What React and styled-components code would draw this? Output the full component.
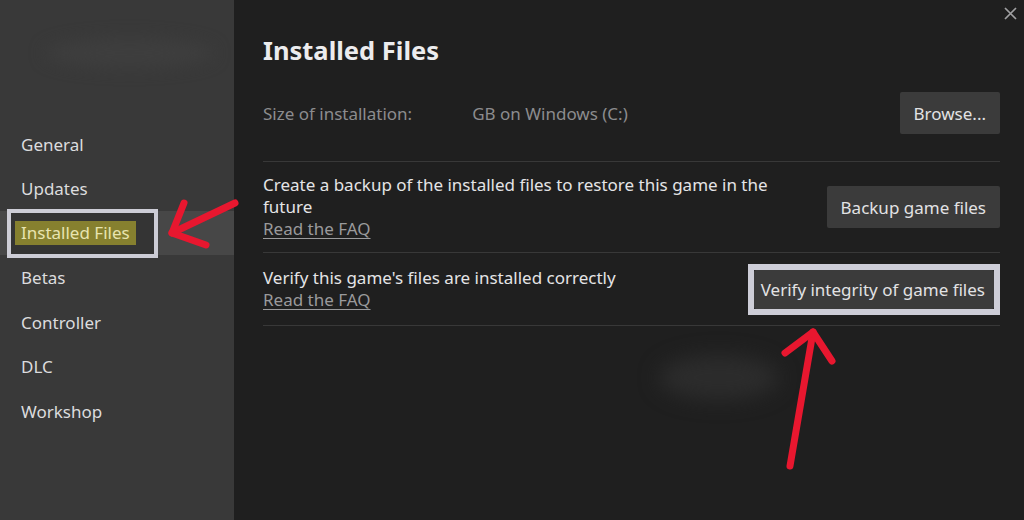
import React from "react";
import styled, { createGlobalStyle } from "styled-components";

const GlobalStyle = createGlobalStyle`
  html, body { margin: 0; padding: 0; background: #1f1f1f; }
  * { box-sizing: border-box; }
`;

const navItems = ["General", "Updates", "Installed Files", "Betas", "Controller", "DLC", "Workshop"];

function App() {
  return (
    <Page>
      <GlobalStyle />
      <Sidebar>
        <BlurName />
        <Nav>
          {navItems.map((item) => (
            <NavItem key={item} $active={item === "Installed Files"}>
              {item === "Installed Files" ? (
                <Marked>
                  <Highlight>{item}</Highlight>
                </Marked>
              ) : (
                item
              )}
            </NavItem>
          ))}
        </Nav>
      </Sidebar>
      <Main>
        <CloseBtn aria-label="close">
          <svg width="13" height="13" viewBox="0 0 13 13">
            <path d="M1 1L12 12M12 1L1 12" stroke="#a0a0a2" strokeWidth="1.7" />
          </svg>
        </CloseBtn>
        <Title>Installed Files</Title>
        <SizeRow>
          <Muted>Size of installation:</Muted>
          <Muted $gap>GB on Windows (C:)</Muted>
          <Spacer />
          <Button>Browse...</Button>
        </SizeRow>
        <Row>
          <TextCol>
            <Desc>Create a backup of the installed files to restore this game in the future</Desc>
            <Faq href="#">Read the FAQ</Faq>
          </TextCol>
          <Button>Backup game files</Button>
        </Row>
        <Row $pad={14}>
          <TextCol>
            <Desc>Verify this game's files are installed correctly</Desc>
            <Faq href="#">Read the FAQ</Faq>
          </TextCol>
          <Outline>
            <Button $slim>Verify integrity of game files</Button>
          </Outline>
        </Row>
        <Smudge />
      </Main>
      <Arrows viewBox="0 0 1024 520" width="1024" height="520">
        <g stroke="#e8172f" strokeWidth="7" strokeLinecap="round" strokeLinejoin="round" fill="none">
          <path d="M235 203L172 233" />
          <path d="M184 203L172 233L206 245" />
          <path d="M813 332L790 466" />
          <path d="M785 353L813 332L832 361" />
        </g>
      </Arrows>
    </Page>
  );
}

export default App;

const Page = styled.div`
  position: relative;
  display: flex;
  width: 1024px;
  height: 520px;
  overflow: hidden;
  background: #1f1f1f;
  font-family: "Noto Sans", "Open Sans", sans-serif;
  color: #e6e6e8;
`;

const Sidebar = styled.aside`
  width: 234px;
  flex-shrink: 0;
  background: #393939;
  display: flex;
  flex-direction: column;
  padding-top: 38px;
`;

const BlurName = styled.div`
  height: 30px;
  margin: 0 20px 0 45px;
  border-radius: 50%;
  background: #3e3e3e;
  filter: blur(8px);
`;

const Nav = styled.nav`
  margin-top: 53.75px;
  display: flex;
  flex-direction: column;
`;

const NavItem = styled.div`
  height: 44.5px;
  display: flex;
  align-items: center;
  padding-left: ${(p) => (p.$active ? "7px" : "21px")};
  font-size: 17px;
  color: #dcdcde;
  background: ${(p) => (p.$active ? "#474747" : "transparent")};
`;

const Marked = styled.span`
  display: flex;
  align-items: center;
  height: 49px;
  padding: 0 18px 0 4px;
  border: 4px solid #cdcdd6;
  background: #343434;
`;

const Highlight = styled.span`
  display: inline-block;
  height: 24px;
  line-height: 24px;
  padding: 0 6px;
  background: #86802f;
  color: #e8e4b0;
`;

const Main = styled.main`
  position: relative;
  flex: 1;
  padding: 0 24px 0 29px;
  display: flex;
  flex-direction: column;
`;

const CloseBtn = styled.button`
  position: absolute;
  top: 7px;
  right: 7px;
  width: 13px;
  height: 13px;
  padding: 0;
  border: none;
  background: none;
  display: flex;
`;

const Title = styled.h1`
  margin: 34px 0 0;
  font-size: 25.5px;
  line-height: 32px;
  font-weight: 700;
  color: #ececee;
`;

const SizeRow = styled.div`
  display: flex;
  align-items: center;
  padding: 26px 0 27px;
  border-bottom: 1px solid #383838;
`;

const Muted = styled.span`
  font-size: 17px;
  color: #8c8c8e;
  margin-left: ${(p) => (p.$gap ? "60px" : "0")};
`;

const Spacer = styled.div`
  flex: 1;
`;

const Row = styled.div`
  display: flex;
  align-items: center;
  justify-content: space-between;
  padding: ${(p) => p.$pad || 12}px 0;
  border-bottom: 1px solid #383838;
`;

const TextCol = styled.div`
  display: flex;
  flex-direction: column;
  max-width: 525px;
`;

const Desc = styled.div`
  font-size: 17px;
  line-height: 22px;
  color: #e4e4e6;
`;

const Faq = styled.a`
  font-size: 17px;
  line-height: 22px;
  color: #9a9a9c;
  text-decoration: underline;
  text-underline-offset: 3px;
  align-self: flex-start;
`;

const Button = styled.button`
  height: ${(p) => (p.$slim ? "39px" : "42px")};
  padding: 0 ${(p) => (p.$slim ? "9px 0 7px" : "14px")};
  border: none;
  border-radius: 2px;
  background: #3b3b3b;
  color: #e2e2e4;
  font-family: inherit;
  font-size: 17px;
  white-space: nowrap;
  flex-shrink: 0;
`;

const Outline = styled.div`
  border: 6px solid #cdcdd7;
  display: flex;
  margin: -4px 0;
`;

const Smudge = styled.div`
  position: absolute;
  left: 425px;
  top: 355px;
  width: 120px;
  height: 45px;
  border-radius: 50%;
  background: #2c2c2c;
  filter: blur(10px);
`;

const Arrows = styled.svg`
  position: absolute;
  left: 0;
  top: 0;
  pointer-events: none;
`;
